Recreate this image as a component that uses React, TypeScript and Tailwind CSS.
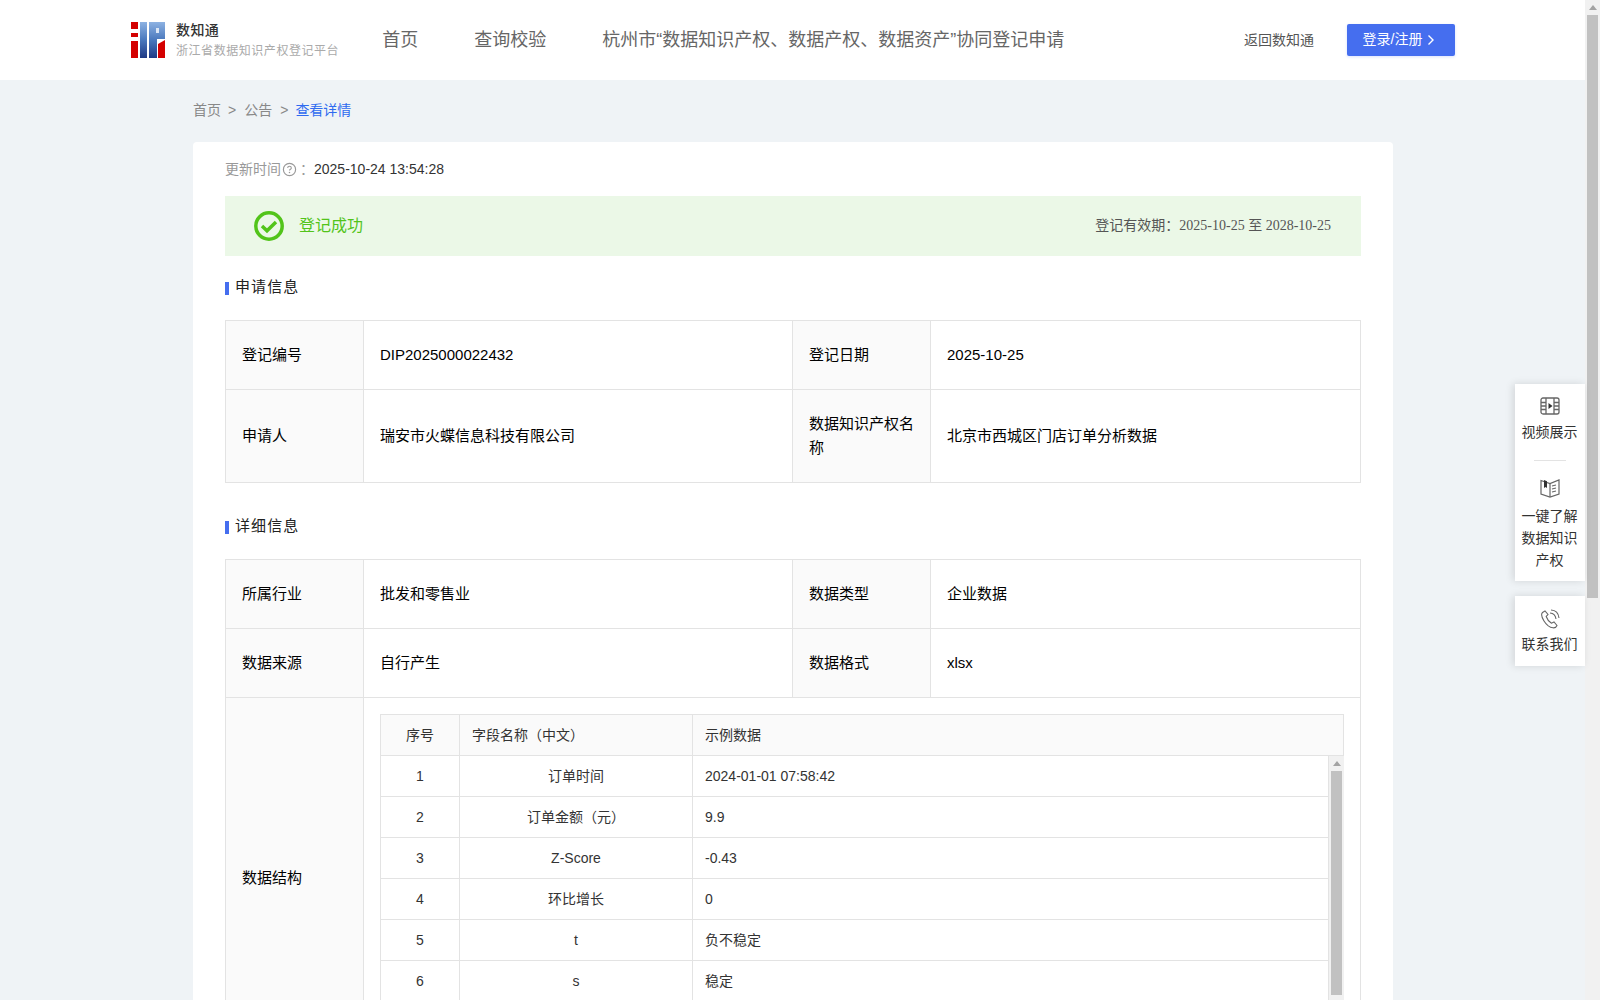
import React from "react";

const font = "font-['Liberation_Sans','Noto_Sans_CJK_SC',sans-serif]";

function Logo() {
  return (
    <svg width="34" height="36" viewBox="0 0 34 36" className="shrink-0">
      <defs>
        <linearGradient id="lg" x1="0" y1="0" x2="0" y2="1">
          <stop offset="0" stopColor="#8db2e2" />
          <stop offset="0.5" stopColor="#4a78bd" />
          <stop offset="1" stopColor="#1f3a85" />
        </linearGradient>
      </defs>
      <rect x="0" y="0" width="7" height="7" fill="#d40000" />
      <rect x="0" y="11" width="7" height="4" fill="#d40000" />
      <rect x="0" y="19" width="7" height="17" fill="#d40000" />
      <rect x="9" y="0" width="7" height="36" fill="url(#lg)" />
      <path d="M18 0h16v17h-8v19h-8z" fill="url(#lg)" />
      <rect x="25" y="6" width="3" height="5" fill="#dbe6f5" />
      <path d="M27 36V22l7-4v18z" fill="#d40000" />
    </svg>
  );
}

function Cell({ head, children, className = "" }: { head?: boolean; children: React.ReactNode; className?: string }) {
  return (
    <td
      className={`border border-[#e3e3e3] px-[16px] text-[15px] leading-[24px] text-black ${head ? "bg-[#fafafa]" : "bg-white"} ${className}`}
    >
      {children}
    </td>
  );
}

function InfoTable({ rows }: { rows: React.ReactNode }) {
  return (
    <table className="w-[1135px] table-fixed border-collapse">
      <colgroup>
        <col className="w-[138px]" />
        <col className="w-[429px]" />
        <col className="w-[138px]" />
        <col className="w-[430px]" />
      </colgroup>
      <tbody>{rows}</tbody>
    </table>
  );
}

function SectionTitle({ children }: { children: React.ReactNode }) {
  return (
    <div className="flex items-center gap-[6px] h-[20px]">
      <span className="w-[4px] h-[13px] mt-[3px] bg-[#456eef]" />
      <span className="text-[15px] tracking-[1.1px] text-[#222]">{children}</span>
    </div>
  );
}

const fields: [string, string, string][] = [
  ["1", "订单时间", "2024-01-01 07:58:42"],
  ["2", "订单金额（元）", "9.9"],
  ["3", "Z-Score", "-0.43"],
  ["4", "环比增长", "0"],
  ["5", "t", "负不稳定"],
  ["6", "s", "稳定"],
];

function ScrollArrow() {
  return <span className="w-0 h-0 border-x-[4px] border-x-transparent border-b-[5px] border-b-[#a3a3a3]" />;
}

function FieldTable() {
  return (
    <div className="w-[964px] text-[14px] text-[#333]">
      <div className="flex h-[42px] bg-[#fafafa] border border-[#e3e3e3]">
        <div className="w-[79px] border-r border-[#e3e3e3] flex items-center justify-center">序号</div>
        <div className="w-[233px] border-r border-[#e3e3e3] flex items-center px-[12px]">字段名称（中文）</div>
        <div className="flex-1 flex items-center px-[12px]">示例数据</div>
      </div>
      <div className="flex border-l border-[#e3e3e3] h-[260px] overflow-hidden">
        <div className="flex-1 min-w-0">
          {fields.map((f) => (
            <div key={f[0]} className="flex h-[41px] border-b border-[#e3e3e3]">
              <div className="w-[79px] border-r border-[#e3e3e3] flex items-center justify-center">{f[0]}</div>
              <div className="w-[233px] border-r border-[#e3e3e3] flex items-center justify-center">{f[1]}</div>
              <div className="flex-1 flex items-center px-[12px]">{f[2]}</div>
            </div>
          ))}
        </div>
        <div className="w-[16px] shrink-0 bg-[#f1f1f1] border-l border-[#e3e3e3] flex flex-col items-center pt-[5px]">
          <ScrollArrow />
          <div className="mt-[5px] w-[11px] ml-[-1px] h-[224px] bg-[#c1c1c1]" />
        </div>
      </div>
    </div>
  );
}

function SideItem({ icon, gap, children }: { icon: React.ReactNode; gap: string; children: React.ReactNode }) {
  return (
    <div className="flex flex-col items-center">
      {icon}
      <div className={`text-[14px] leading-[22px] text-[#333] text-center w-[57px] ml-[-1px] ${gap}`}>{children}</div>
    </div>
  );
}

export default function App() {
  return (
    <div className={`relative flex h-[1000px] w-full overflow-hidden bg-[#eff3f6] ${font}`}>
      <div className="flex-1 min-w-0">
        <header className="h-[80px] bg-white flex items-center">
          <div className="ml-[131px] flex items-center">
            <Logo />
            <div className="ml-[11px] flex flex-col">
              <span className="text-[14px] leading-[20px] font-medium tracking-[0.4px] text-[#333] mt-[-1px]">数知通</span>
              <span className="text-[12px] leading-[18px] text-[#aaa] mt-[2px] tracking-[0.55px]">浙江省数据知识产权登记平台</span>
            </div>
          </div>
          <nav className="ml-[43px] flex items-center gap-[56px] text-[18px] text-[#666]">
            <span>首页</span>
            <span>查询校验</span>
            <span>杭州市“数据知识产权、数据产权、数据资产”协同登记申请</span>
          </nav>
          <div className="ml-auto flex items-center">
            <span className="text-[14px] text-[#555]">返回数知通</span>
            <button className="ml-[33px] mr-[130px] w-[108px] h-[32px] pb-[1px] pr-[4px] rounded-[2px] bg-[#456eef] text-white text-[14px] flex items-center justify-center gap-[5px] shadow-[0_1px_3px_rgba(69,110,239,0.2)]">
              登录/注册
              <svg width="8" height="12" viewBox="0 0 8 12" fill="none" stroke="#fff" strokeWidth="1.4">
                <path d="M1.500 1.500 6 6l-4.500 4.500" />
              </svg>
            </button>
          </div>
        </header>

        <main className="ml-[193px] w-[1200px]">
          <div className="h-[62px] flex items-center text-[14px] text-[#888] pb-[1px]">
            <span>首页</span>
            <span className="ml-[7px] mr-[8px]">&gt;</span>
            <span>公告</span>
            <span className="ml-[8px] mr-[7px]">&gt;</span>
            <span className="text-[#2f6bf0]">查看详情</span>
          </div>

          <section className="bg-white rounded-t-[4px] px-[32px] pt-[17px] h-[900px]">
            <div className="flex items-center h-[20px] text-[14px]">
              <span className="text-[#999]">更新时间</span>
              <svg width="15" height="15" viewBox="0 0 14 14" fill="none" className="ml-[1px]">
                <circle cx="7" cy="7" r="5.7" stroke="#999" strokeWidth="1.100" />
                <path d="M5.300 5.600c0-1 .8-1.600 1.700-1.600s1.700.6 1.700 1.500c0 1.200-1.700 1.300-1.700 2.500" stroke="#999" strokeWidth="1" />
                <circle cx="7" cy="9.800" r=".7" fill="#999" />
              </svg>
              <span className="text-[#999] ml-[3px]">：</span>
              <span className="text-[#333]">2025-10-24 13:54:28</span>
            </div>

            <div className="mt-[17px] h-[60px] bg-[#ebf8e7] flex items-center pl-[29px] pr-[30px]">
              <svg width="30" height="30" viewBox="0 0 30 30" fill="none">
                <circle cx="15" cy="15" r="13.200" stroke="#52c41a" strokeWidth="3.500" />
                <path d="M8 15l5 4.800 9-8.800" stroke="#52c41a" strokeWidth="3.500" />
              </svg>
              <span className="ml-[15px] text-[16px] text-[#52c41a]">登记成功</span>
              <span className="ml-auto pb-[2px] text-[14px] text-[#555] font-['Liberation_Serif','Noto_Sans_CJK_SC',serif]">
                登记有效期：2025-10-25 至 2028-10-25
              </span>
            </div>

            <div className="mt-[21px]">
              <SectionTitle>申请信息</SectionTitle>
            </div>
            <div className="mt-[23px]">
              <InfoTable
                rows={
                  <>
                    <tr className="h-[69px]">
                      <Cell head>登记编号</Cell>
                      <Cell>DIP2025000022432</Cell>
                      <Cell head>登记日期</Cell>
                      <Cell>2025-10-25</Cell>
                    </tr>
                    <tr className="h-[93px]">
                      <Cell head>申请人</Cell>
                      <Cell>瑞安市火蝶信息科技有限公司</Cell>
                      <Cell head>数据知识产权名称</Cell>
                      <Cell>北京市西城区门店订单分析数据</Cell>
                    </tr>
                  </>
                }
              />
            </div>

            <div className="mt-[33px]">
              <SectionTitle>详细信息</SectionTitle>
            </div>
            <div className="mt-[23px]">
              <InfoTable
                rows={
                  <>
                    <tr className="h-[69px]">
                      <Cell head>所属行业</Cell>
                      <Cell>批发和零售业</Cell>
                      <Cell head>数据类型</Cell>
                      <Cell>企业数据</Cell>
                    </tr>
                    <tr className="h-[69px]">
                      <Cell head>数据来源</Cell>
                      <Cell>自行产生</Cell>
                      <Cell head>数据格式</Cell>
                      <Cell>xlsx</Cell>
                    </tr>
                    <tr className="h-[360px]">
                      <Cell head>数据结构</Cell>
                      <td colSpan={3} className="border border-[#e3e3e3] px-[16px] pt-[16px] pb-[16px] align-top">
                        <FieldTable />
                      </td>
                    </tr>
                  </>
                }
              />
            </div>
          </section>
        </main>
      </div>

      <div className="w-[15px] shrink-0 bg-[#f1f1f1] flex flex-col items-center pt-[5px]">
        <ScrollArrow />
        <div className="mt-[5px] w-[11px] h-[583px] bg-[#c1c1c1]" />
      </div>

      <aside className="absolute right-[15px] top-[384px] w-[70px] flex flex-col gap-[15px]">
        <div className="bg-white shadow-[-2px_0_8px_rgba(0,0,0,0.12)] flex flex-col items-center pt-[13px] h-[197px]">
          <SideItem
            gap="mt-[6px]"
            icon={
              <svg width="20" height="18" viewBox="0 0 20 18" fill="none" stroke="#666" strokeWidth="1.300">
                <rect x="1" y="1" width="18" height="16" rx="2" />
                <path d="M6 1v16M14 1v16M1 5.500h5M1 9h5M1 12.500h5M14 5.500h5M14 9h5M14 12.500h5" />
                <path d="M8.500 6v6l4-3z" fill="#333" stroke="none" />
              </svg>
            }
          >
            视频展示
          </SideItem>
          <div className="w-[32px] h-px bg-[#e3e3e3] mt-[17px] mb-[17px]" />
          <SideItem
            gap="mt-[7px]"
            icon={
              <svg width="20" height="20" viewBox="0 0 20 20" fill="none" stroke="#666" strokeWidth="1.200">
                <path d="M1 2.500l9 3 9-3.500v14l-9 3-9-3z" />
                <path d="M10 5.500V19" />
                <path d="M4 2v8l1.500-1L7 10V3.300z" fill="#333" stroke="none" />
                <path d="M12 8l4-1M12 11l4-1M12 14l4-1" />
              </svg>
            }
          >
            一键了解数据知识产权
          </SideItem>
        </div>
        <div className="bg-white shadow-[-2px_0_8px_rgba(0,0,0,0.12)] flex flex-col items-center pt-[13px] h-[70px]">
          <SideItem
            gap="mt-[4px]"
            icon={
              <svg width="20" height="20" viewBox="0 0 20 20" fill="none" stroke="#666" strokeWidth="1.100">
                <path d="M5 2 2.500 3.500C1 5 1.500 8 4 12s6 6.500 9 6.800c2 .2 3.500-1 4-2.300l-3-3.500-2.500 1.200C9.500 13 7 10 6.200 7.500L8 5.500z" />
                <path d="M10 4c3 .2 5.500 2.500 6 6" />
                <path d="M11 1c4.500.2 7.500 3.500 8 8" />
              </svg>
            }
          >
            联系我们
          </SideItem>
        </div>
      </aside>
    </div>
  );
}
